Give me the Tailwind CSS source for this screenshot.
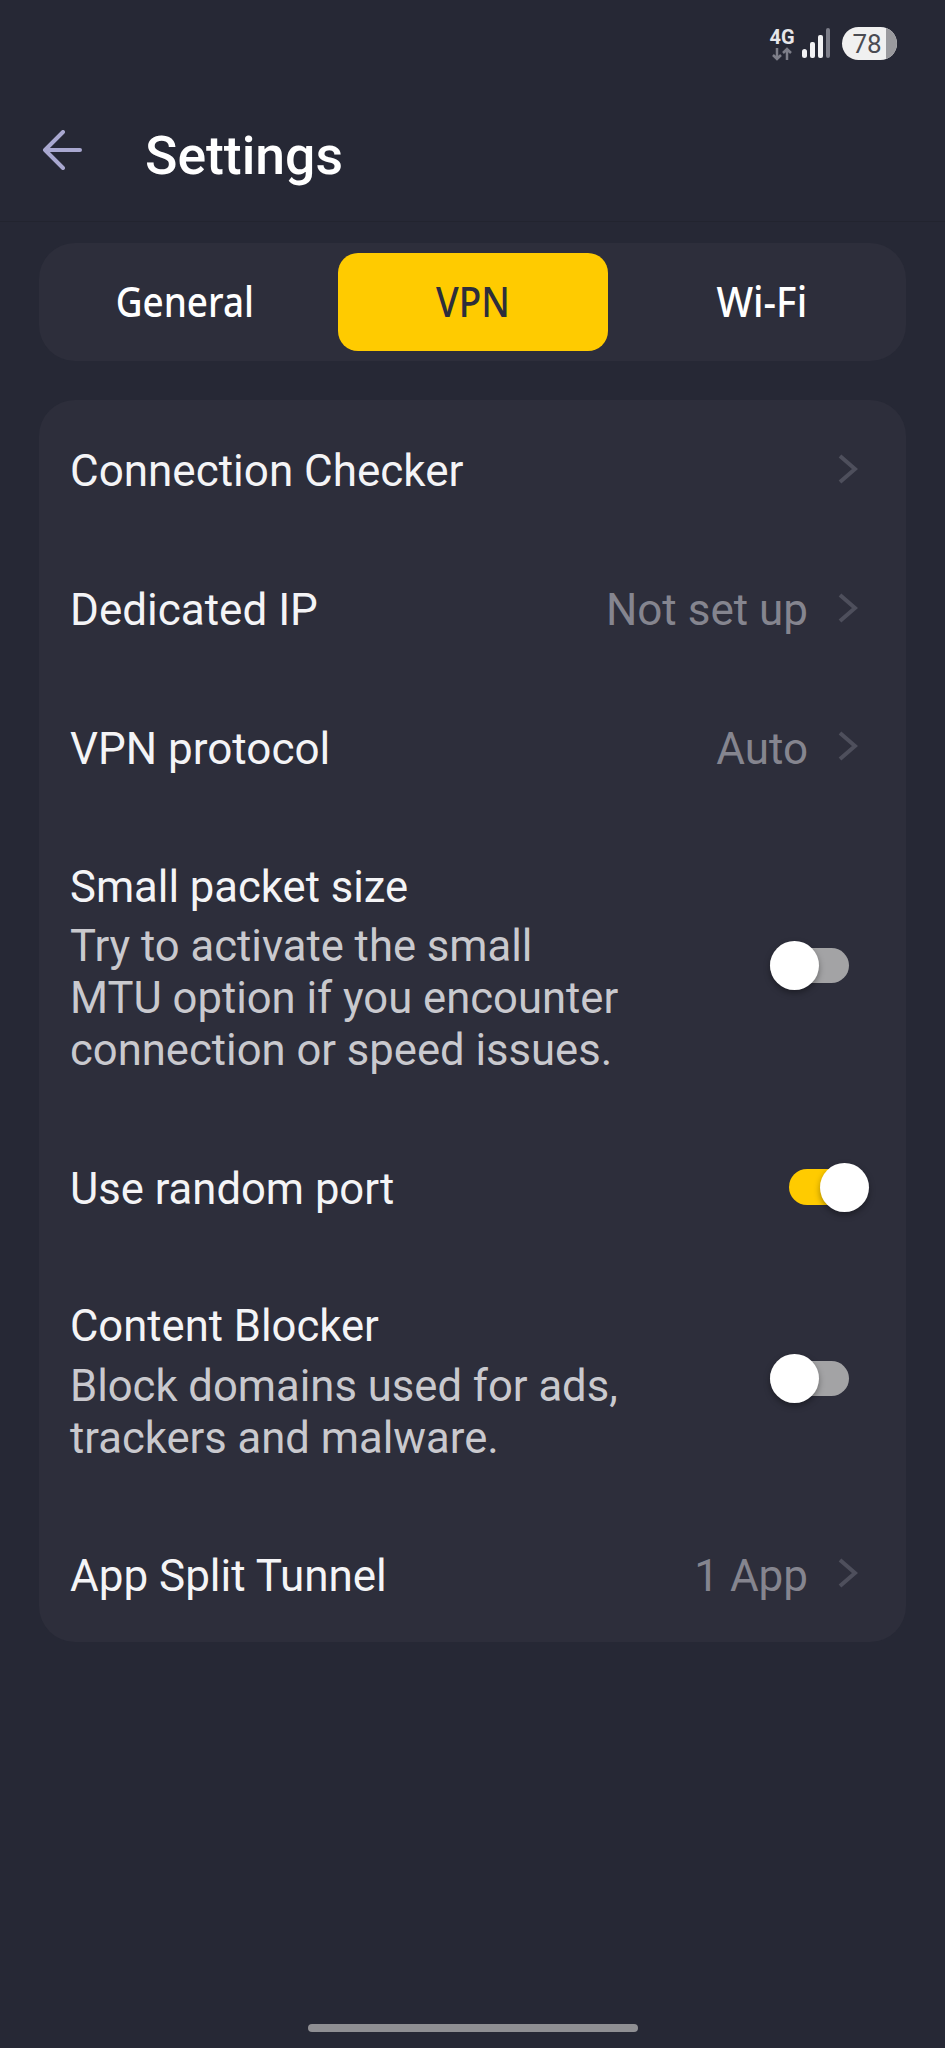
<!DOCTYPE html>
<html lang="en">
<head>
    <meta charset="UTF-8">
    <meta name="viewport" content="width=device-width, initial-scale=1.0">
    <title>Settings</title>
    <script src="https://cdn.jsdelivr.net/npm/@tailwindcss/browser@4"></script>
</head>
<body class="bg-[#262835] font-['Roboto',sans-serif] text-white">
    <div class="relative flex h-[2048px] w-[945px] flex-col overflow-hidden">
        <!-- status bar -->
        <div class="flex h-[88px] items-start justify-end pr-[48px] pt-[27px]">
            <div class="mr-[7px] flex w-[26px] flex-col items-center">
                <span class="text-[20px] leading-[20px] font-bold text-[#e6e6ea]">4G</span>
                <svg width="22" height="14" viewBox="0 0 22 14" fill="none" stroke="#7d7e89" stroke-width="2.5">
                    <path d="M6 1v11M2 8l4 4 4-4M16 13V2M12 6l4-4 4 4"/>
                </svg>
            </div>
            <svg class="mr-[12px]" width="28" height="32" viewBox="0 0 28 32">
                <rect x="0" y="22" width="5" height="9" rx="2.5" fill="#f2f2f4"/>
                <rect x="8" y="15" width="5" height="16" rx="2" fill="#f2f2f4"/>
                <rect x="16" y="8" width="5" height="23" rx="2" fill="#f2f2f4"/>
                <rect x="24" y="1" width="4" height="30" rx="2" fill="#7d7e89"/>
            </svg>
            <div class="relative flex h-[33px] w-[55px] items-center overflow-hidden rounded-full bg-[#f0f0f0]">
                <span class="w-[50px] text-center text-[26px] leading-none text-[#4a4b52]">78</span>
                <div class="absolute top-0 right-0 h-full w-[11px] bg-[#9a9a9e]"></div>
            </div>
        </div>

        <!-- header -->
        <div class="flex h-[134px] items-center border-b border-[#22242f] pb-[7px] pl-[42px]">
            <svg class="mt-[-3px]" width="40" height="40" viewBox="0 0 40 40" fill="none" stroke="#a9a8d0" stroke-width="4" stroke-linecap="round" stroke-linejoin="round">
                <path d="M38 20H3M21 2L3 20l18 18"/>
            </svg>
            <h1 class="mt-[10px] ml-[63px] text-[53.5px] font-medium">Settings</h1>
        </div>

        <!-- tabs -->
        <div class="mx-[39px] mt-[21px] flex h-[118px] items-center rounded-[36px] bg-[#2d2e3b] px-[10px] font-['Noto_Sans',sans-serif] text-[41px] font-medium">
            <div class="w-[289px] pr-[18px] text-center"><span class="inline-block scale-x-[0.9]">General</span></div>
            <div class="flex h-[98px] w-[270px] items-center justify-center rounded-[20px] bg-[#ffcb00] text-[#2d2e3b]"><span class="inline-block scale-x-[0.9]">VPN</span></div>
            <div class="flex-1 pl-[20px] text-center"><span class="inline-block scale-x-[0.95]">Wi-Fi</span></div>
        </div>

        <!-- vpn options -->
        <div class="mx-[39px] mt-[39px] flex h-[1242px] flex-col rounded-[36px] bg-[#2d2e3b] pr-[48px] pl-[31px] text-[44px] text-[#f4f4f6]">
            <div class="flex h-[139px] items-center justify-between">
                <span class="mt-[4px]">Connection Checker</span>
                <svg width="20" height="30" viewBox="0 0 20 30" fill="none" stroke="#4e4f5c" stroke-width="4"><path d="M2 2l15 13L2 28"/></svg>
            </div>
            <div class="flex h-[139px] items-center">
                <span class="mt-[5px]">Dedicated IP</span>
                <span class="mt-[5px] mr-[30px] ml-auto text-[#85858f]">Not set up</span>
                <svg width="20" height="30" viewBox="0 0 20 30" fill="none" stroke="#4e4f5c" stroke-width="4"><path d="M2 2l15 13L2 28"/></svg>
            </div>
            <div class="flex h-[139px] items-center">
                <span class="mt-[6px]">VPN protocol</span>
                <span class="mt-[6px] mr-[30px] ml-auto text-[#85858f]">Auto</span>
                <svg width="20" height="30" viewBox="0 0 20 30" fill="none" stroke="#4e4f5c" stroke-width="4"><path d="M2 2l15 13L2 28"/></svg>
            </div>
            <div class="flex h-[300px] items-center justify-between">
                <div class="pt-[7px]">
                    <div class="text-[43.6px] leading-[56px]">Small packet size</div>
                    <p class="mt-[5px] w-[560px] text-[43.6px] leading-[52px] text-[#c9c9ce]">Try to activate the small MTU option if you encounter connection or speed issues.</p>
                </div>
                <div class="relative mt-[1px] mr-[9px] h-[35px] w-[79px] rounded-full bg-[#a3a3a5]">
                    <div class="absolute top-[-7px] left-0 size-[49px] rounded-full bg-white shadow-[0_3px_6px_rgba(0,0,0,0.35)]"></div>
                </div>
            </div>
            <div class="flex h-[139px] items-center justify-between">
                <span class="mt-[11px] text-[43.6px]">Use random port</span>
                <div class="relative mt-[6px] mr-[6px] h-[36px] w-[63px] rounded-full bg-[#ffcb00]">
                    <div class="absolute top-[-6px] right-[-17px] size-[49px] rounded-full bg-white shadow-[0_3px_6px_rgba(0,0,0,0.35)]"></div>
                </div>
            </div>
            <div class="flex h-[251px] items-center justify-between">
                <div class="pt-[8px]">
                    <div class="text-[43.6px] leading-[56px]">Content Blocker</div>
                    <p class="mt-[6px] w-[560px] text-[43.6px] leading-[52px] text-[#c9c9ce]">Block domains used for ads, trackers and malware.</p>
                </div>
                <div class="relative mt-[1px] mr-[9px] h-[35px] w-[79px] rounded-full bg-[#a3a3a5]">
                    <div class="absolute top-[-7px] left-0 size-[49px] rounded-full bg-white shadow-[0_3px_6px_rgba(0,0,0,0.35)]"></div>
                </div>
            </div>
            <div class="flex h-[139px] items-center">
                <span class="mt-[6px]">App Split Tunnel</span>
                <span class="mt-[6px] mr-[30px] ml-auto text-[#85858f]">1 App</span>
                <svg width="20" height="30" viewBox="0 0 20 30" fill="none" stroke="#4e4f5c" stroke-width="4"><path d="M2 2l15 13L2 28"/></svg>
            </div>
        </div>

        <!-- gesture bar -->
        <div class="absolute bottom-[16px] left-[308px] h-[8px] w-[330px] rounded-full bg-[#8f8f93]"></div>
    </div>
</body>
</html>
